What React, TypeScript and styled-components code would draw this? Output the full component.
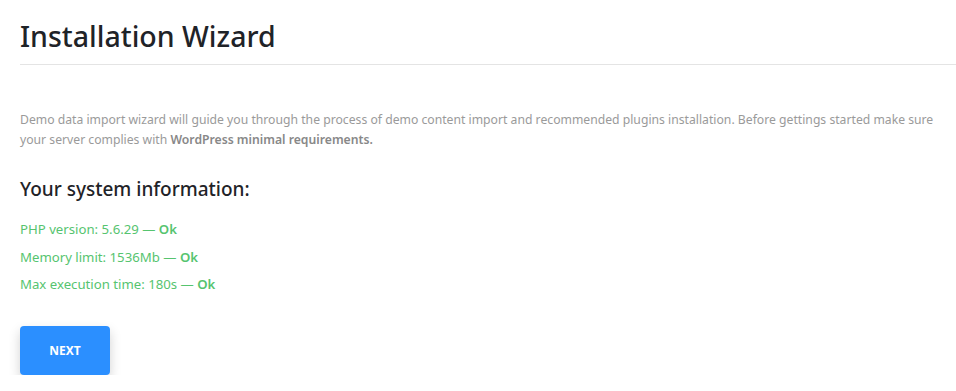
import React from 'react';
import styled, { createGlobalStyle } from 'styled-components';

const GlobalStyle = createGlobalStyle`
  html, body {
    margin: 0;
    padding: 0;
    background: #ffffff;
  }
  body {
    font-family: 'Noto Sans', 'Open Sans', sans-serif;
  }
`;

const checks = [
  { label: 'PHP version: 5.6.29', status: 'Ok' },
  { label: 'Memory limit: 1536Mb', status: 'Ok' },
  { label: 'Max execution time: 180s', status: 'Ok' },
];

const App = () => (
  <>
    <GlobalStyle />
    <Page>
      <Header>
        <Title>Installation Wizard</Title>
      </Header>
      <Intro>
        Demo data import wizard will guide you through the process of demo content import and
        recommended plugins installation. Before gettings started make sure your server complies
        with <strong>WordPress minimal requirements.</strong>
      </Intro>
      <SubTitle>Your system information:</SubTitle>
      <CheckList>
        {checks.map(({ label, status }) => (
          <CheckItem key={label}>
            {label} — <strong>{status}</strong>
          </CheckItem>
        ))}
      </CheckList>
      <NextButton type="button">NEXT</NextButton>
    </Page>
  </>
);

const Page = styled.div`
  padding: 0 0 0 20px;
  display: flex;
  flex-direction: column;
  align-items: flex-start;
`;

const Header = styled.div`
  align-self: stretch;
  border-bottom: 1px solid #e4e4e4;
  padding: 18px 0 10px;
`;

const Title = styled.h1`
  margin: 0;
  font-size: 28.5px;
  line-height: 36px;
  font-weight: 500;
  color: #1f2328;
`;

const Intro = styled.p`
  margin: 45px 20px 0 0;
  font-size: 12.2px;
  line-height: 19.5px;
  color: #9a9a9a;

  strong {
    font-weight: 600;
    color: #888888;
  }
`;

const SubTitle = styled.h2`
  margin: 27px 0 0;
  font-size: 19px;
  line-height: 26px;
  font-weight: 500;
  color: #1f2328;
`;

const CheckList = styled.ul`
  list-style: none;
  margin: 18px 0 0;
  padding: 0;
  display: flex;
  flex-direction: column;
  gap: 8px;
`;

const CheckItem = styled.li`
  font-size: 13.2px;
  line-height: 19.5px;
  color: #56c46f;

  strong {
    font-weight: 600;
  }
`;

const NextButton = styled.button`
  margin-top: 31px;
  width: 90px;
  height: 49px;
  border: none;
  border-radius: 4px;
  background: #2b8fff;
  color: #ffffff;
  font-family: inherit;
  font-size: 12px;
  font-weight: 700;
  box-shadow: 0 5px 12px rgba(0, 0, 0, 0.18);
  cursor: pointer;
`;

export default App;
